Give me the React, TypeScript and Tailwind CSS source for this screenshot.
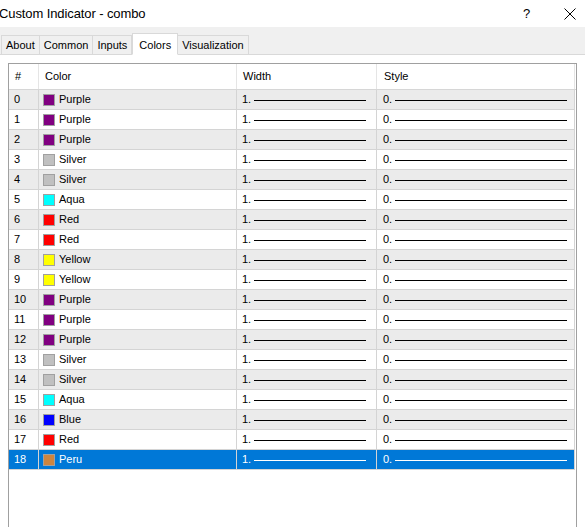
import React from "react";

type Row = { name: string; hex: string };

const rows: Row[] = [
  { name: "Purple", hex: "#800080" },
  { name: "Purple", hex: "#800080" },
  { name: "Purple", hex: "#800080" },
  { name: "Silver", hex: "#c0c0c0" },
  { name: "Silver", hex: "#c0c0c0" },
  { name: "Aqua", hex: "#00ffff" },
  { name: "Red", hex: "#ff0000" },
  { name: "Red", hex: "#ff0000" },
  { name: "Yellow", hex: "#ffff00" },
  { name: "Yellow", hex: "#ffff00" },
  { name: "Purple", hex: "#800080" },
  { name: "Purple", hex: "#800080" },
  { name: "Purple", hex: "#800080" },
  { name: "Silver", hex: "#c0c0c0" },
  { name: "Silver", hex: "#c0c0c0" },
  { name: "Aqua", hex: "#00ffff" },
  { name: "Blue", hex: "#0000ff" },
  { name: "Red", hex: "#ff0000" },
  { name: "Peru", hex: "#cd853f" },
];

const tabs = ["About", "Common", "Inputs", "Colors", "Visualization"];

export default function App() {
  const selected = 18;

  return (
    <div className="w-[585px] h-[527px] bg-white overflow-hidden font-['Liberation_Sans',Arial,sans-serif] text-black">
      {/* title bar */}
      <div className="h-[27px] flex items-center justify-between">
        <span className="-ml-[1px] text-[13px] tracking-[-0.1px]">Custom Indicator - combo</span>
        <div className="flex items-center">
          <span className="text-[13px] w-[41px] text-left">?</span>
          <svg width="12" height="12" viewBox="0 0 12 12" className="mr-[9px]">
            <path d="M0.5 0.5 L11.5 11.5 M11.5 0.5 L0.5 11.5" stroke="#000" strokeWidth="1" />
          </svg>
        </div>
      </div>

      {/* tab strip */}
      <div className="h-[28px] bg-[#f0f0f0] flex items-end pl-[1px] border-b border-[#d9d9d9]">
        {tabs.map(t =>
          t === "Colors" ? (
            <div
              key={t}
              className="h-[22px] -mb-[1px] px-[6px] bg-white border border-[#d9d9d9] border-b-white text-[11px] flex items-start pt-[3px]"
            >
              {t}
            </div>
          ) : (
            <div
              key={t}
              className="h-[19px] px-[4px] bg-[#f0f0f0] border border-[#d9d9d9] border-b-0 -ml-[1px] first:ml-0 text-[11px] flex items-center pt-[1px]"
            >
              {t}
            </div>
          )
        )}
      </div>

      {/* list */}
      <div className="mt-[8px] ml-[8px] w-[569px] h-[480px] border border-[#a0a0a0] border-b-0 text-[11px]">
        <div className="flex h-[26px] border-b border-[#d6d6d6]">
          <div className="w-[30px] border-r border-[#e5e5e5] pl-[6px] flex items-center">#</div>
          <div className="w-[198px] border-r border-[#e5e5e5] pl-[6px] flex items-center">Color</div>
          <div className="w-[140px] border-r border-[#e5e5e5] pl-[6px] flex items-center">Width</div>
          <div className="w-[198px] border-r border-[#e5e5e5] pl-[7px] flex items-center">Style</div>
        </div>
        {rows.map((r, i) => {
          const sel = i === selected;
          const bg = sel ? "bg-[#0078d7] text-white" : i % 2 === 0 ? "bg-[#ebebeb]" : "bg-white";
          const line = sel ? "bg-white" : "bg-black";
          return (
            <div key={i} className={`flex h-[20px] w-[566px] border-b border-[#d4d4d4] ${bg}`}>
              <div className="w-[30px] border-r border-[#d4d4d4] pl-[5px] flex items-center">{i}</div>
              <div className="w-[198px] border-r border-[#d4d4d4] pl-[4px] flex items-center gap-[4px]">
                <span className="w-[12px] h-[12px] border border-[#a0a0a0]" style={{ backgroundColor: r.hex }} />
                <span>{r.name}</span>
              </div>
              <div className="w-[140px] border-r border-[#d4d4d4] pl-[5px] flex items-center">
                <span className="w-[12px]">1.</span>
                <span className={`h-[1px] w-[112px] mt-[1px] ${line}`} />
              </div>
              <div className="w-[198px] border-r border-[#d4d4d4] pl-[6px] flex items-center">
                <span className="w-[12px]">0.</span>
                <span className={`h-[1px] w-[172px] mt-[1px] ${line}`} />
              </div>
            </div>
          );
        })}
      </div>
    </div>
  );
}
